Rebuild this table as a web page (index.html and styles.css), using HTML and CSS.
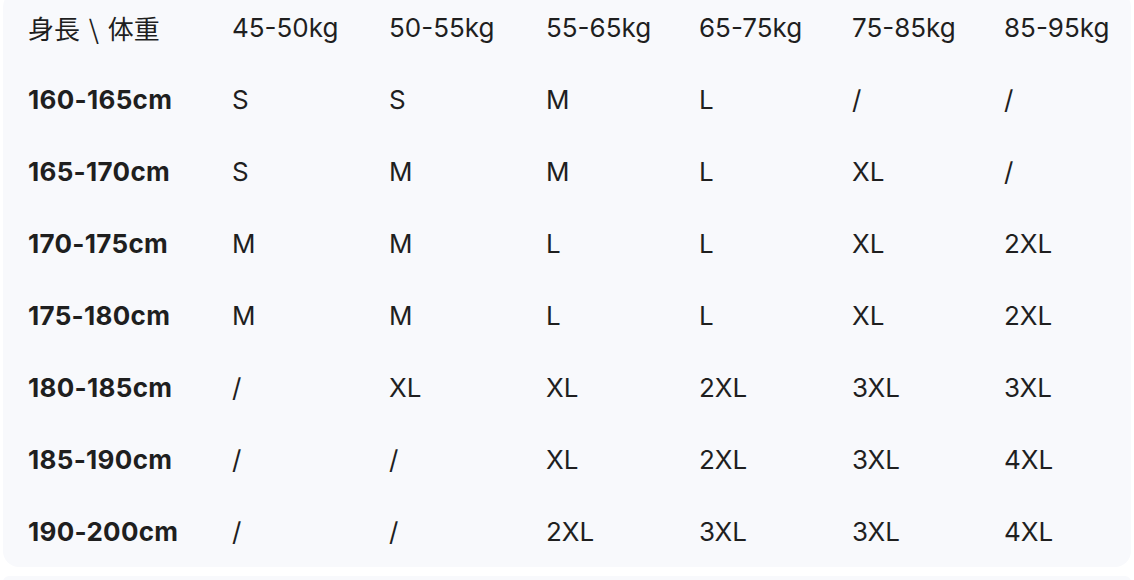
FILE: index.html
```html
<!DOCTYPE html>
<html lang="ja">
<head>
<meta charset="utf-8">
<title>サイズ表</title>
<link rel="stylesheet" href="styles.css">
</head>
<body>
<div class="sheet">
  <div class="grid">
    <div class="cell head corner">身長 \ 体重</div>
    <div class="cell head">45-50kg</div>
    <div class="cell head">50-55kg</div>
    <div class="cell head">55-65kg</div>
    <div class="cell head">65-75kg</div>
    <div class="cell head">75-85kg</div>
    <div class="cell head">85-95kg</div>

    <div class="cell label">160-165cm</div>
    <div class="cell">S</div><div class="cell">S</div><div class="cell">M</div><div class="cell">L</div><div class="cell">/</div><div class="cell">/</div>

    <div class="cell label">165-170cm</div>
    <div class="cell">S</div><div class="cell">M</div><div class="cell">M</div><div class="cell">L</div><div class="cell">XL</div><div class="cell">/</div>

    <div class="cell label">170-175cm</div>
    <div class="cell">M</div><div class="cell">M</div><div class="cell">L</div><div class="cell">L</div><div class="cell">XL</div><div class="cell">2XL</div>

    <div class="cell label">175-180cm</div>
    <div class="cell">M</div><div class="cell">M</div><div class="cell">L</div><div class="cell">L</div><div class="cell">XL</div><div class="cell">2XL</div>

    <div class="cell label">180-185cm</div>
    <div class="cell">/</div><div class="cell">XL</div><div class="cell">XL</div><div class="cell">2XL</div><div class="cell">3XL</div><div class="cell">3XL</div>

    <div class="cell label">185-190cm</div>
    <div class="cell">/</div><div class="cell">/</div><div class="cell">XL</div><div class="cell">2XL</div><div class="cell">3XL</div><div class="cell">4XL</div>

    <div class="cell label">190-200cm</div>
    <div class="cell">/</div><div class="cell">/</div><div class="cell">2XL</div><div class="cell">3XL</div><div class="cell">3XL</div><div class="cell">4XL</div>
  </div>
</div>
<div class="sheet next"></div>
</body>
</html>
```
FILE: styles.css
```css
html, body {
  margin: 0;
  padding: 0;
  background: #ffffff;
  overflow: hidden;
  height: 580px;
}

body {
  font-family: Inter, "Noto Sans CJK JP", sans-serif;
  color: #1f1f1f;
  font-size: 26px;
}

.sheet {
  margin: -9px 3px 0 3px;
  background: #f8f9fc;
  border-radius: 16px;
}

.grid {
  display: grid;
  grid-template-columns: 204px 157px 157px 153px 153px 152px 1fr;
  padding-left: 25px;
}

.cell {
  height: 72px;
  display: flex;
  align-items: center;
  white-space: nowrap;
}

.head {
  font-weight: 400;
}

.corner {
  font-family: "Noto Sans CJK JP", sans-serif;
  font-size: 26px;
  word-spacing: 3px;
}

.label {
  font-weight: 700;
  letter-spacing: 0.3px;
}

.next {
  margin-top: 9px;
  height: 6px;
  border-radius: 6px 6px 0 0;
}
```
